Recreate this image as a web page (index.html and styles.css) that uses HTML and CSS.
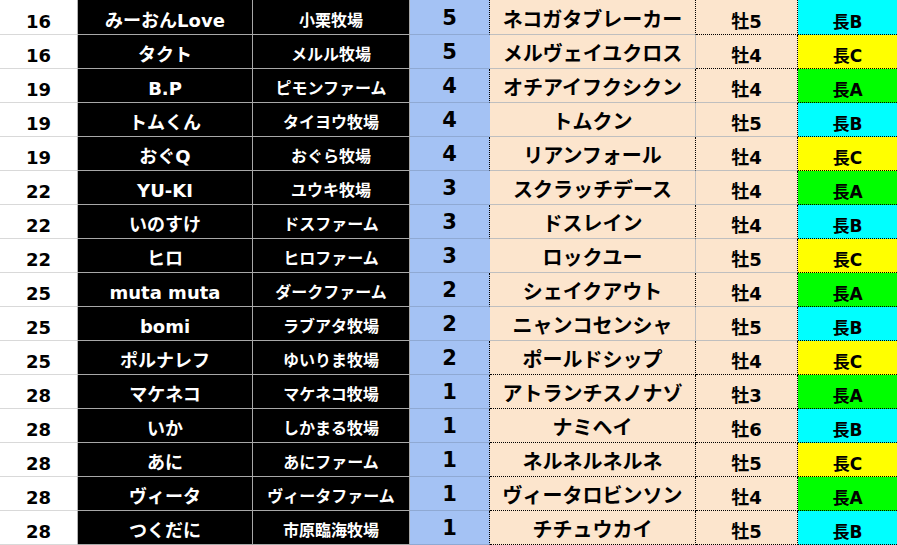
FILE: index.html
```html
<!DOCTYPE html>
<html lang="ja">
<head>
<meta charset="utf-8">
<title>ランキング</title>
<link rel="stylesheet" href="styles.css">
</head>
<body>
<div class="sheet">
  <div class="c rank">16</div><div class="c name">みーおんLove</div><div class="c farm">小栗牧場</div><div class="c num dot-r">5</div><div class="c horse dot-r">ネコガタブレーカー</div><div class="c sex dot-b">牡5</div><div class="c grade gb">長B</div>
  <div class="c rank">16</div><div class="c name">タクト</div><div class="c farm">メルル牧場</div><div class="c num">5</div><div class="c horse">メルヴェイユクロス</div><div class="c sex dot-b">牡4</div><div class="c grade gc">長C</div>
  <div class="c rank">19</div><div class="c name">B.P</div><div class="c farm">ピモンファーム</div><div class="c num dot-r">4</div><div class="c horse dot-r">オチアイフクシクン</div><div class="c sex">牡4</div><div class="c grade ga">長A</div>
  <div class="c rank">19</div><div class="c name">トムくん</div><div class="c farm">タイヨウ牧場</div><div class="c num">4</div><div class="c horse">トムクン</div><div class="c sex">牡5</div><div class="c grade gb">長B</div>
  <div class="c rank">19</div><div class="c name">おぐQ</div><div class="c farm">おぐら牧場</div><div class="c num dot-r">4</div><div class="c horse dot-r">リアンフォール</div><div class="c sex">牡4</div><div class="c grade gc">長C</div>
  <div class="c rank">22</div><div class="c name">YU-KI</div><div class="c farm">ユウキ牧場</div><div class="c num">3</div><div class="c horse">スクラッチデース</div><div class="c sex">牡4</div><div class="c grade ga">長A</div>
  <div class="c rank">22</div><div class="c name">いのすけ</div><div class="c farm">ドスファーム</div><div class="c num dot-r">3</div><div class="c horse dot-r">ドスレイン</div><div class="c sex">牡4</div><div class="c grade gb">長B</div>
  <div class="c rank">22</div><div class="c name">ヒロ</div><div class="c farm">ヒロファーム</div><div class="c num">3</div><div class="c horse">ロックユー</div><div class="c sex">牡5</div><div class="c grade gc">長C</div>
  <div class="c rank">25</div><div class="c name">muta muta</div><div class="c farm">ダークファーム</div><div class="c num dot-r">2</div><div class="c horse dot-r">シェイクアウト</div><div class="c sex">牡4</div><div class="c grade ga">長A</div>
  <div class="c rank">25</div><div class="c name">bomi</div><div class="c farm">ラブアタ牧場</div><div class="c num">2</div><div class="c horse">ニャンコセンシャ</div><div class="c sex">牡5</div><div class="c grade gb">長B</div>
  <div class="c rank">25</div><div class="c name">ポルナレフ</div><div class="c farm">ゆいりま牧場</div><div class="c num dot-r">2</div><div class="c horse dot-r dot-b">ポールドシップ</div><div class="c sex dot-b">牡4</div><div class="c grade gc">長C</div>
  <div class="c rank">28</div><div class="c name">マケネコ</div><div class="c farm">マケネコ牧場</div><div class="c num dot-r">1</div><div class="c horse dot-r dot-b">アトランチスノナゾ</div><div class="c sex dot-b">牡3</div><div class="c grade ga">長A</div>
  <div class="c rank">28</div><div class="c name">いか</div><div class="c farm">しかまる牧場</div><div class="c num dot-r">1</div><div class="c horse dot-r dot-b">ナミヘイ</div><div class="c sex dot-b">牡6</div><div class="c grade gb">長B</div>
  <div class="c rank">28</div><div class="c name">あに</div><div class="c farm">あにファーム</div><div class="c num dot-r">1</div><div class="c horse dot-r dot-b">ネルネルネルネ</div><div class="c sex dot-b">牡5</div><div class="c grade gc">長C</div>
  <div class="c rank">28</div><div class="c name">ヴィータ</div><div class="c farm">ヴィータファーム</div><div class="c num dot-r">1</div><div class="c horse dot-r dot-b">ヴィータロビンソン</div><div class="c sex dot-b">牡4</div><div class="c grade ga">長A</div>
  <div class="c rank">28</div><div class="c name">つくだに</div><div class="c farm">市原臨海牧場</div><div class="c num dot-r">1</div><div class="c horse dot-r dot-b">チチュウカイ</div><div class="c sex dot-b">牡5</div><div class="c grade gb">長B</div>
</div>
</body>
</html>
```
FILE: styles.css
```css
html, body {
  margin: 0;
  padding: 0;
  background: #ffffff;
}

.sheet {
  display: grid;
  grid-template-columns: 78px 175px 157px 80px 206px 102px 99px;
  grid-template-rows: 35px repeat(15, 34px);
  width: 897px;
  font-family: "DejaVu Sans", "Noto Sans CJK JP", sans-serif;
  font-weight: bold;
}

.c {
  box-sizing: border-box;
  display: flex;
  align-items: flex-end;
  justify-content: center;
  white-space: nowrap;
  line-height: 1;
  border-right: 1px solid #bfbfbf;
  border-bottom: 1px solid #bfbfbf;
  overflow: hidden;
}

.rank {
  background: #ffffff;
  color: #000000;
  font-size: 18px;
  padding-bottom: 3px;
  border-bottom-color: #d9d9d9;
  border-right-color: #b4b4b4;
}

.name {
  background: #000000;
  color: #ffffff;
  font-size: 18px;
  padding-bottom: 4px;
  border-bottom-color: #a8a8a8;
  border-right-color: #a8a8a8;
}

.farm {
  background: #000000;
  color: #ffffff;
  font-size: 16px;
  padding-bottom: 5px;
  border-bottom-color: #a8a8a8;
  border-right-color: #a8a8a8;
}

.num {
  background: #a4c2f4;
  color: #000000;
  font-size: 21px;
  padding-bottom: 5px;
  border-bottom-color: #8fa9d3;
  border-right-color: #a4c2f4;
}

.horse {
  background: #fce5cd;
  color: #000000;
  font-size: 20px;
  padding-bottom: 4px;
}

.sex {
  background: #fce5cd;
  color: #000000;
  font-size: 18px;
  padding-bottom: 3px;
  border-right: 1px dotted #000000;
}

.grade {
  color: #000000;
  font-size: 17px;
  padding-bottom: 3px;
  border-right: none;
  border-bottom: 1px dotted #000000;
}

.dot-r {
  border-right: 1px dotted #000000;
}

.dot-b {
  border-bottom: 1px dotted #000000;
}

.ga { background: #00ff00; }
.gb { background: #00ffff; }
.gc { background: #ffff00; }
```
